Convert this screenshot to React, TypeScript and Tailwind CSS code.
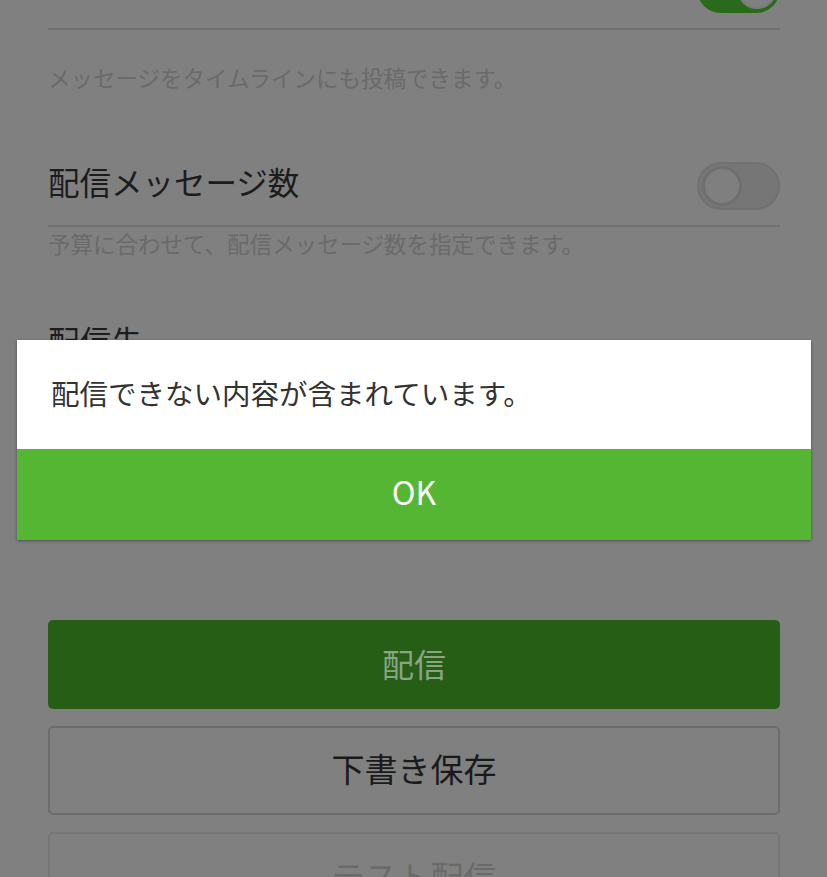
import React from 'react';

const jp = { fontFamily: '"Noto Sans CJK JP", "Noto Sans", sans-serif' };

const Toggle: React.FC<{ on?: boolean }> = ({ on }) => (
    <div
        className={`w-[83px] h-[48px] rounded-full shrink-0 flex items-center px-[3px] ${
            on ? 'bg-[#2a6a1b] justify-end' : 'bg-[#767676] border-2 border-[#717171] justify-start'
        }`}
    >
        <div
            className={`w-[40px] h-[40px] rounded-full ${
                on ? 'bg-[#808080] border-2 border-[#7a7a7a]' : 'bg-[#7f7f7f] border-[3px] border-[#6f6f6f]'
            }`}
        />
    </div>
);

const SettingRow: React.FC<{ label: string; on?: boolean; lift?: boolean }> = ({ label, on, lift }) => (
    <div className="flex items-center justify-between h-[80px] border-b-2 border-[#717171]">
        <span className={`text-[31.5px] leading-[40px] text-[#1c1c1c] ${lift ? 'mb-[22px]' : 'mb-[10px]'}`}>{label}</span>
        <Toggle on={on} />
    </div>
);

export default function App() {
    return (
        <div className="relative w-[827px] h-[877px] overflow-hidden bg-[#808080]" style={jp}>
            <div className="mx-[48px] w-[732px] -mt-[50px]">
                <SettingRow label="タイムライン投稿" on lift />
                <p className="pt-[31px] pb-[54px] text-[22.5px] leading-[32px] text-[#6a6a6a]">
                    メッセージをタイムラインにも投稿できます。
                </p>

                <SettingRow label="配信メッセージ数" />
                <p className="pt-0 text-[22.5px] leading-[32px] text-[#6a6a6a]">
                    予算に合わせて、配信メッセージ数を指定できます。
                </p>

                <div className="mt-[61px] text-[31.5px] leading-[40px] text-[#1c1c1c]">配信先</div>

                <div className="mt-[260px] flex flex-col gap-[17px]">
                    <button className="h-[89px] w-full rounded-[5px] bg-[#265e16] text-[32px] text-[#8aa585] pb-[4px]">
                        配信
                    </button>
                    <button className="h-[89px] w-full rounded-[5px] border-2 border-[#6c6c6c] text-[33px] text-[#1a1a1a] pb-[4px]">
                        下書き保存
                    </button>
                    <button className="h-[89px] w-full rounded-[5px] border-2 border-[#767676] text-[33px] text-[#6a6a6a]">
                        テスト配信
                    </button>
                </div>
            </div>

            <div className="absolute left-[17px] top-[340px] w-[794px] shadow-[0_1px_3px_rgba(0,0,0,0.4)]">
                <div className="h-[109px] bg-white flex items-center pl-[34px]">
                    <span className="text-[28.5px] text-[#333333] mb-[3px]">配信できない内容が含まれています。</span>
                </div>
                <button className="h-[91px] w-full bg-[#55b633] text-white text-[32px] pb-[8px]">OK</button>
            </div>
        </div>
    );
}
